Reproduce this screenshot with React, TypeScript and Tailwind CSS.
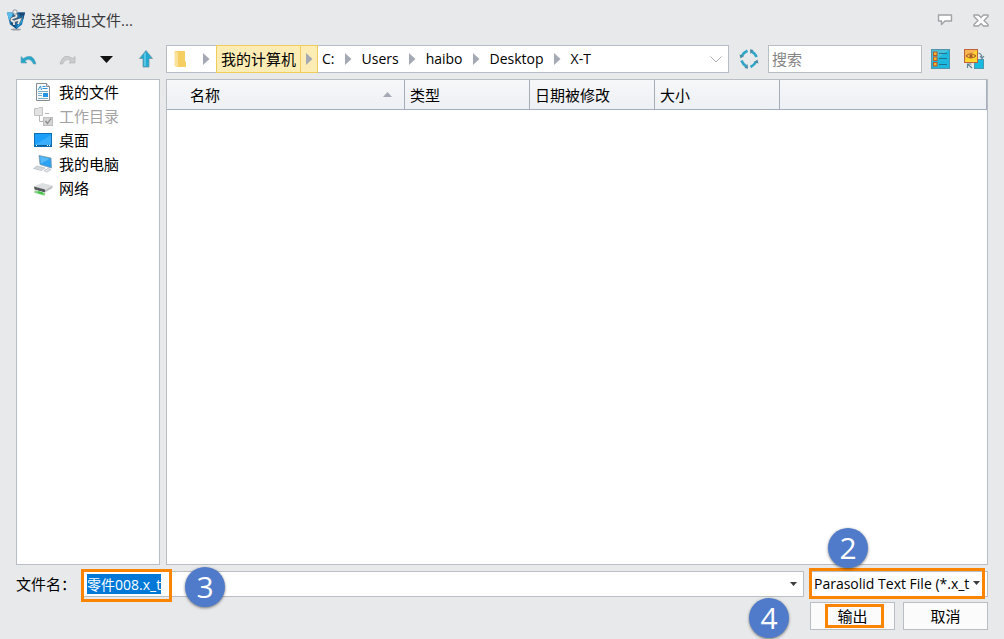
import { useEffect, useRef, useState } from 'react'
import type { ReactNode } from 'react'

const places = [
  { name: '我的文件', icon: <DocumentIcon /> },
  { name: '工作目录', icon: <WorkDirIcon />, disabled: true },
  { name: '桌面', icon: <DesktopIcon /> },
  { name: '我的电脑', icon: <ComputerIcon /> },
  { name: '网络', icon: <NetworkIcon /> },
]

const crumbs = ['C:', 'Users', 'haibo', 'Desktop', 'X-T']

function LogoIcon() {
  return (
    <svg width="20" height="22" viewBox="0 0 20 22">
      <ellipse cx="10" cy="20.5" rx="5" ry="1" fill="#9a9da1" />
      <path d="M1 3.5 H19 L16 15.5 L10.5 20 L4 15.5 Z" fill="#1a6fae" />
      <path d="M1 3.5 H7 L5.5 10 L3 11 Z" fill="#58bdea" />
      <path d="M12 3.5 H19 L17 11 Z" fill="#1b4a78" />
      <path d="M14 11 L17 6 L16 13 L11 19 Z" fill="#1fb0ea" />
      <path d="M4 14 L8 15 L10.5 20 Z" fill="#0d3d66" />
      <path d="M8 5 Q12 6 10 8 L6 9.5 Q4 12 8 12.5 L8 16 M9 12 L14 10.5 L12 15" fill="none" stroke="#4f565e" strokeWidth="3" />
      <path d="M8 5 Q12 6 10 8 L6 9.5 Q4 12 8 12.5 L8 16 M9 12 L14 10.5 L12 15" fill="none" stroke="#e8eaec" strokeWidth="1.8" />
      <circle cx="9" cy="3" r="2.2" fill="#eceeef" stroke="#7a8086" strokeWidth="0.8" />
    </svg>
  )
}

function UndoIcon() {
  return (
    <svg width="17" height="11" viewBox="0 0 17 11">
      <path d="M1 2.5 L1 9 L7 9 L5 7 Q10 3 13.5 10 L16 10 Q13 -2 3.2 4.5 Z" fill="#25a7cc" stroke="#6ea3b4" strokeWidth="0.6" />
    </svg>
  )
}

function RedoIcon() {
  return (
    <svg width="17" height="11" viewBox="0 0 17 11">
      <path d="M16 2.5 L16 9 L10 9 L12 7 Q7 3 3.5 10 L1 10 Q4 -2 13.8 4.5 Z" fill="#cbccce" stroke="#adafb1" strokeWidth="0.6" />
    </svg>
  )
}

function UpIcon() {
  return (
    <svg width="16" height="18" viewBox="0 0 16 18">
      <path d="M8 0.5 L14.5 8.5 L11 8.5 L11 17 L5 17 L5 8.5 L1.5 8.5 Z" fill="#20a9d2" stroke="#6d95a4" strokeWidth="0.8" />
      <path d="M7 3 L7 16" stroke="#6fd0ea" strokeWidth="1.4" />
    </svg>
  )
}

function RefreshIcon() {
  return (
    <svg width="20" height="20" viewBox="0 0 20 20">
      <g fill="none" stroke="#2ea6c8" strokeWidth="2.6">
        <path d="M8.5 1.8 Q4.5 3.5 2.8 7" />
        <path d="M12 2.4 Q16 4 17.6 8" />
        <path d="M17.2 12.5 Q15.5 16 11.5 18" />
        <path d="M2.4 11.5 Q4 15.5 7.5 17.5" />
      </g>
      <g fill="#4a8da3">
        <path d="M0.5 5.5 L5.2 7 L1.5 9.5 Z" />
        <path d="M11 0.2 L14.5 1 L11.4 5 Z" />
        <path d="M19.5 14.5 L15 13 L18.5 10.5 Z" />
        <path d="M9 19.8 L5.5 19 L8.6 15 Z" />
      </g>
    </svg>
  )
}

function DetailsIcon() {
  return (
    <svg width="20" height="20" viewBox="0 0 20 20">
      <rect x="0.5" y="0.5" width="18" height="19" fill="#1cb8de" stroke="#5393aa" />
      <path d="M1 1 L18 1 L1 13 Z" fill="#7fcbdc" opacity="0.45" />
      <path d="M8 4.5 H16 M8 9.5 H16 M8 15.5 H16" stroke="#21708e" />
      <g fill="#f9b52c" stroke="#b5582b" strokeWidth="1">
        <rect x="2.5" y="3" width="3.5" height="3.5" />
        <rect x="2.5" y="8" width="3.5" height="3.5" />
        <rect x="2.5" y="13.5" width="3.5" height="3.5" />
      </g>
    </svg>
  )
}

function PreviewIcon() {
  return (
    <svg width="21" height="20" viewBox="0 0 21 20">
      <rect x="10.5" y="10.5" width="9" height="9" fill="#17bbdf" stroke="#4b98ae" />
      <rect x="0.5" y="0.5" width="13" height="13" fill="#fdd62f" stroke="#c0623c" />
      <path d="M1 1 H13 L1 10 Z" fill="#f6a06b" opacity="0.6" />
      <path d="M2 7 Q7 2.5 12 7 Q7 11 2 7 Z" fill="#fbc13a" stroke="#a4542a" />
      <circle cx="7" cy="7" r="1.6" fill="#a4542a" />
      <path d="M14.5 4 Q18 5 18 9 M16 7 L18 9.5 L20 7" fill="none" stroke="#5f8494" strokeWidth="1.1" />
      <path d="M8 19 L4 15.5 M3.5 19 L3.5 15 L7.5 15" fill="none" stroke="#5f8494" strokeWidth="1.1" />
    </svg>
  )
}

function FolderIcon() {
  return (
    <svg width="13" height="18" viewBox="0 0 13 18">
      <path d="M1 1 H11 V11 L12 12 V17 H2 Z" fill="#f6cf62" />
      <path d="M0.5 1 L4 2.5 V17.5 L0.5 16 Z" fill="#fbe29a" />
    </svg>
  )
}

function DocumentIcon() {
  return (
    <svg width="16" height="18" viewBox="0 0 16 18">
      <path d="M1.5 0.5 H11.5 L14.5 3.5 V17.5 H1.5 Z" fill="#f8fafb" stroke="#858b90" />
      <path d="M11.5 0.5 V3.5 H14.5" fill="#dfe3e6" stroke="#858b90" />
      <path d="M3 7 L5.5 3 L6.5 7 M7.5 3.5 H10.5 M7.5 5.5 H12.5" fill="none" stroke="#2d94d8" />
      <path d="M3 8.5 H13 M3 10.5 H7 M3 12.5 H7 M3 15.5 H13" stroke="#78aecb" />
      <rect x="8" y="10" width="5" height="4" fill="#2296e4" />
    </svg>
  )
}

function WorkDirIcon() {
  return (
    <svg width="19" height="19" viewBox="0 0 19 19">
      <path d="M0.5 1.5 H4 L5 0.5 H8.5 V8.5 H0.5 Z" fill="#e2e2e2" stroke="#c2c2c2" />
      <path d="M11 6.5 H15 M5.5 9 V14.5 H9" fill="none" stroke="#b6b6b6" />
      <rect x="9.5" y="10.5" width="9" height="8" fill="#d5d5d5" stroke="#bdbdbd" />
      <path d="M11.5 14 L13.5 16.5 L17 11.5" fill="none" stroke="#8a8a8a" strokeWidth="1.3" />
    </svg>
  )
}

function DesktopIcon() {
  return (
    <svg width="18" height="14" viewBox="0 0 18 14">
      <rect x="0.5" y="0.5" width="17" height="13" fill="#1b9ff8" stroke="#0e6fb6" />
      <path d="M1 12 L17 2 V12 Z" fill="#3aaefb" />
      <path d="M1 12.5 H17" stroke="#0a5ea0" />
      <path d="M2 12.5 H3 M13 12.5 H14 M15 12.5 H16" stroke="#ffffff" />
    </svg>
  )
}

function ComputerIcon() {
  return (
    <svg width="20" height="18" viewBox="0 0 20 18">
      <path d="M6 0.5 L18 3 L18.5 13 L7 9.5 Z" fill="#2ea2f2" stroke="#7890a4" strokeWidth="0.7" />
      <path d="M7 1.5 L17 3.7 L8 8.5 Z" fill="#58b9f6" />
      <path d="M4 11 L12 13 L8.5 15.5 L0.5 13.5 Z" fill="#d3d8dc" stroke="#abb2b8" strokeWidth="0.6" />
      <path d="M11 15.5 L15 13.5 L18 14.5 L14 17.3 Z" fill="#e3e6e8" stroke="#abb2b8" strokeWidth="0.6" />
    </svg>
  )
}

function NetworkIcon() {
  return (
    <svg width="20" height="15" viewBox="0 0 20 15">
      <path d="M1 5.5 L9 2 L19.5 4.5 L12 9 Z" fill="#dcdedf" />
      <path d="M1 5.5 L12 8.5 L12 11.5 L1.5 8.5 Z" fill="#55595c" />
      <path d="M12 9 L19.5 4.5 V7 L12 11.5 Z" fill="#bcbfc1" />
      <path d="M1.5 10.5 L12 13.5" stroke="#8bcf8c" strokeWidth="2.4" />
      <path d="M5 11 L10 12.5" stroke="#41c646" strokeWidth="2" />
    </svg>
  )
}

function CrumbArrow() {
  return (
    <svg width="7" height="12" viewBox="0 0 7 12" className="shrink-0">
      <path d="M0 0 L6.5 6 L0 12 Z" fill="#a5a9b4" />
    </svg>
  )
}

function DownTriangle() {
  return (
    <svg width="7" height="4" viewBox="0 0 7 4">
      <path d="M0 0 H7 L3.5 4 Z" fill="#3d3d3d" />
    </svg>
  )
}

function ToolButton({ label, children }: { label: string; children: ReactNode }) {
  return (
    <button type="button" aria-label={label} className="flex h-7 w-[39px] shrink-0 items-center justify-center">
      {children}
    </button>
  )
}

// Numbered step marker laid over the dialog
function Step({ n, className }: { n: number; className: string }) {
  return (
    <div
      className={`pointer-events-none absolute z-20 flex size-10 items-center justify-center rounded-full bg-[#4f7bca] font-['Open_Sans',sans-serif] text-[30px] leading-10 font-medium text-white shadow-[0_1px_3px_rgba(0,0,0,0.5)] ${className}`}
    >
      {n}
    </div>
  )
}

export default function App() {
  const [fileName, setFileName] = useState('零件008.x_t')
  const nameRef = useRef<HTMLInputElement>(null)

  useEffect(() => {
    nameRef.current?.focus()
    nameRef.current?.select()
  }, [])

  return (
    <div className="flex min-h-screen flex-col bg-[#e8e9eb] pb-[9px] font-['Open_Sans','Noto_Sans_CJK_SC',sans-serif] text-[15px] leading-5 text-black">
      <header className="flex h-10 items-center pr-[15px] pl-[6px]">
        <LogoIcon />
        <h1 className="ml-[5px] flex-1 text-[#3a3a3a]">选择输出文件...</h1>
        <button type="button" aria-label="反馈" className="mr-5">
          <svg width="16" height="12" viewBox="0 0 16 12">
            <path d="M1.5 1 H14.5 V7 H8 L4.5 10.5 V7 H1.5 Z" fill="#fff" stroke="#a0a2a5" strokeWidth="1.4" strokeLinejoin="round" />
          </svg>
        </button>
        <button type="button" aria-label="关闭">
          <svg width="16" height="13" viewBox="0 0 16 13">
            <path d="M1 1 H5.5 L8 3.5 L10.5 1 H15 V2.5 L11 6.5 L15 10.5 V12 H10.5 L8 9.5 L5.5 12 H1 V10.5 L5 6.5 L1 2.5 Z" fill="#fff" stroke="#a0a2a5" strokeWidth="1.4" strokeLinejoin="round" />
          </svg>
        </button>
      </header>

      <div className="flex items-center pt-[5px] pr-[19px] pb-[6px] pl-[9px]">
        <ToolButton label="后退"><UndoIcon /></ToolButton>
        <ToolButton label="前进"><RedoIcon /></ToolButton>
        <ToolButton label="历史">
          <svg width="13" height="7" viewBox="0 0 13 7">
            <path d="M0 0 H13 L6.5 7 Z" fill="#111" />
          </svg>
        </ToolButton>
        <ToolButton label="向上"><UpIcon /></ToolButton>

        <nav className="ml-px flex h-7 min-w-0 flex-1 items-center border border-[#b6bdc7] bg-white pr-[6px] pl-[7px]">
          <FolderIcon />
          <span className="mr-[6px] ml-4"><CrumbArrow /></span>
          <button type="button" className="h-7 shrink-0 border border-[#f0cc5a] bg-[#fdedb5] px-1">
            我的计算机
          </button>
          <button type="button" aria-label="展开" className="-ml-px flex h-7 w-[18px] shrink-0 items-center justify-center border border-[#f0cc5a] bg-[#fdedb5]">
            <CrumbArrow />
          </button>
          <ol className="ml-1 flex flex-1 items-center gap-[10px]">
            {crumbs.map((crumb, i) => (
              <li key={crumb} className="flex items-center gap-[10px] text-[14px]">
                {i > 0 && <CrumbArrow />}
                <a href="#">{crumb}</a>
              </li>
            ))}
          </ol>
          <button type="button" aria-label="路径列表">
            <svg width="12" height="7" viewBox="0 0 12 7">
              <path d="M0.5 0.5 L6 6 L11.5 0.5" fill="none" stroke="#a8acb2" />
            </svg>
          </button>
        </nav>

        <ToolButton label="刷新"><RefreshIcon /></ToolButton>
        <input
          type="search"
          aria-label="搜索"
          placeholder="搜索"
          className="h-7 w-[154px] border border-[#b9bdc4] bg-white px-[3px] outline-none placeholder:text-[#858585]"
        />
        <button type="button" aria-label="详细信息" className="mr-[13px] ml-[9px]"><DetailsIcon /></button>
        <button type="button" aria-label="预览"><PreviewIcon /></button>
      </div>

      <main className="flex flex-1 gap-[6px] px-4">
        <ul className="w-36 shrink-0 border border-[#b9bdc4] bg-white">
          {places.map((place) => (
            <li key={place.name}>
              <button
                type="button"
                disabled={place.disabled}
                className="flex h-6 w-full items-center gap-[6px] pl-4 disabled:text-[#a3a3a3]"
              >
                <span className="flex w-5 justify-center">{place.icon}</span>
                {place.name}
              </button>
            </li>
          ))}
        </ul>

        <div className="min-w-0 flex-1 border border-[#b9bdc4] bg-white">
          <table className="w-full table-fixed border-separate border-spacing-0 text-left">
            <thead>
              <tr className="h-[30px] bg-linear-to-b from-[#f6f7f9] to-[#edf0f4] *:border-r *:border-b *:border-[#a4adb9] *:p-0 *:font-normal">
                <th className="w-[238px]">
                  <span className="flex items-center justify-between pr-3 pl-[23px]">
                    名称
                    <svg width="9" height="5" viewBox="0 0 9 5">
                      <path d="M0 5 L4.5 0 L9 5 Z" fill="#a5a9b4" />
                    </svg>
                  </span>
                </th>
                <th className="w-[125px]"><span className="pl-[5px]">类型</span></th>
                <th className="w-[125px]"><span className="pl-[5px]">日期被修改</span></th>
                <th className="w-[125px]"><span className="pl-[5px]">大小</span></th>
                <th></th>
              </tr>
            </thead>
          </table>
        </div>
      </main>

      <form className="px-4 pt-[6px]" onSubmit={(e) => e.preventDefault()}>
        <div className="flex items-center gap-[6px]">
          <label htmlFor="file-name" className="w-[60px] shrink-0">文件名：</label>
          <div className="relative min-w-0 flex-1">
            <input
              id="file-name"
              ref={nameRef}
              value={fileName}
              onChange={(e) => setFileName(e.target.value)}
              className="block h-[26px] w-full border border-[#b9bdc4] bg-white px-1 text-[14px] outline-none selection:bg-[#0078d7] selection:text-white"
            />
            <button type="button" aria-label="历史文件名" className="absolute top-0 right-0 flex h-[26px] w-[21px] items-center justify-center">
              <DownTriangle />
            </button>
            <div className="pointer-events-none absolute -top-[2px] -left-px h-[33px] w-[91px] border-3 border-[#fb8500]" />
            <Step n={3} className="-top-1 left-[103px]" />
          </div>
          <div className="relative w-[178px]">
            <select
              aria-label="文件类型"
              className="block h-[26px] w-full appearance-none border border-[#b9bdc4] bg-white pr-4 pl-[3px] text-[14px] outline-none"
            >
              <option>Parasolid Text File (*.x_t</option>
            </select>
            <span className="pointer-events-none absolute top-[10px] right-2 leading-0"><DownTriangle /></span>
            <div className="pointer-events-none absolute -top-[3px] -left-px h-[31px] w-[176px] border-3 border-[#fb8500]" />
            <Step n={2} className="-top-[43px] left-[18px]" />
          </div>
        </div>
        <div className="mt-[5px] flex justify-end gap-2">
          <div className="relative">
            <button type="submit" className="block h-7 w-[85px] border border-[#b9bdc4] bg-[#fbfbfc]">输出</button>
            <div className="pointer-events-none absolute top-[2px] left-[15px] h-6 w-[59px] border-3 border-[#fb8500]" />
            <Step n={4} className="-top-1 -left-[61px]" />
          </div>
          <button type="button" className="h-7 w-[85px] border border-[#b9bdc4] bg-[#fbfbfc]">取消</button>
        </div>
      </form>
    </div>
  )
}
